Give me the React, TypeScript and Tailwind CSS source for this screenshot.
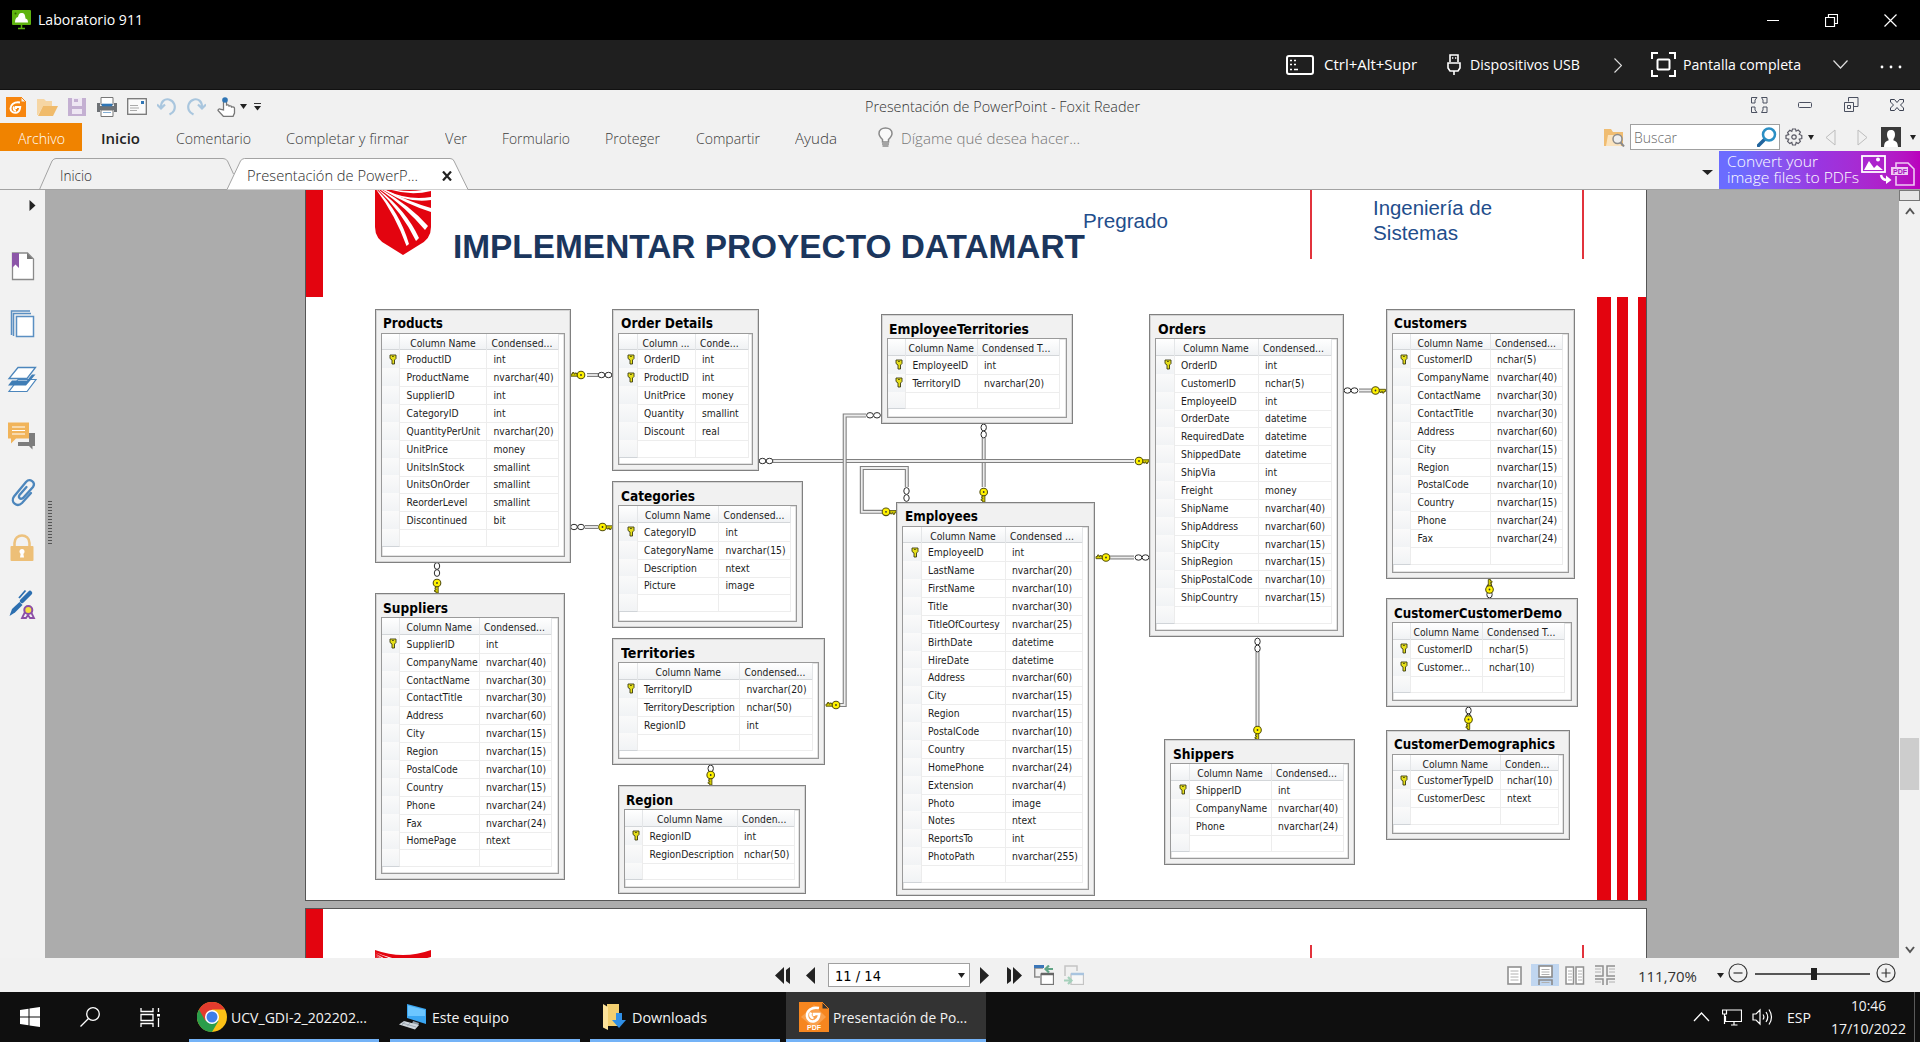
import { useLayoutEffect, useRef } from "react";
import type { ReactNode } from "react";

/* Text stretched horizontally to fill the width of its box. */
function Fit({ className, children }: { className: string; children: ReactNode }) {
  const outer = useRef<HTMLSpanElement>(null);
  const inner = useRef<HTMLSpanElement>(null);
  useLayoutEffect(() => {
    const o = outer.current;
    const i = inner.current;
    if (o && i && i.offsetWidth) {
      const w = i.getBoundingClientRect().width;
      i.style.transform = `scaleX(${o.clientWidth / w})`;
    }
  }, []);
  return (
    <span ref={outer} className={"block shrink-0 whitespace-nowrap " + className}>
      <span ref={inner} className="inline-block origin-left">
        {children}
      </span>
    </span>
  );
}

function Ico({ w, h, className = "", children }: { w: number; h: number; className?: string; children: ReactNode }) {
  return (
    <svg width={w} height={h} viewBox={`0 0 ${w} ${h}`} fill="none" className={"block shrink-0 " + className}>
      {children}
    </svg>
  );
}

function Caret({ className = "", w = 7 }: { className?: string; w?: number }) {
  return (
    <Ico w={w} h={5} className={className}>
      <path d={`M0 0H${w}L${w / 2} 5Z`} fill="#222" />
    </Ico>
  );
}

/* ---------- Remote desktop client ---------- */

function TitleBar() {
  return (
    <div className="flex h-10 items-center bg-black text-[14.5px] text-white">
      <Ico w={20} h={20} className="ml-3">
        <rect x="0" y="0" width="19" height="15" rx="1" fill="#5fb30f" />
        <path d="M3 12.5h13c0-3-1-3.500-2.500-4C13 4 12 3 9.500 3S6.500 5 6 7C4 7.500 3 9 3 12.500Z" fill="#fff" />
        <circle cx="3.500" cy="3.500" r="1" fill="#2c5c00" />
        <path d="M9.500 15v4M6 18.500h7" stroke="#5fb30f" strokeWidth="1.500" />
      </Ico>
      <Fit className="ml-1.5 w-[105px]">Laboratorio 911</Fit>
      <Ico w={12} h={12} className="ml-auto">
        <path d="M0 6.500H12" stroke="#fff" />
      </Ico>
      <Ico w={13} h={13} className="mt-px ml-[46px]">
        <path d="M.5 3.500h9v9h-9zM3.500 3.500v-3h9v9h-3" stroke="#fff" strokeWidth="1.200" />
      </Ico>
      <Ico w={13} h={13} className="mt-px mr-[23px] ml-[46px]">
        <path d="M.5.500l12 12M12.500.500l-12 12" stroke="#fff" strokeWidth="1.200" />
      </Ico>
    </div>
  );
}

function RemoteBar() {
  return (
    <div className="flex h-[50px] items-center border-b border-[#111] bg-[#1f1f1f] pl-[1286px] text-[14.5px] text-white">
      <Ico w={28} h={20}>
        <rect x="1" y="1" width="26" height="18" rx="2" stroke="#fff" strokeWidth="2" />
        <path d="M4 5.500h2m2 0h2M4 9.500h2m2 0h2M4 14.500h2m2 0h4" stroke="#fff" strokeWidth="1.600" />
      </Ico>
      <Fit className="ml-2.5 w-[93px]">Ctrl+Alt+Supr</Fit>
      <Ico w={14} h={21} className="ml-[30px]">
        <path d="M3 8V1h8v7M1 9h12v5l-2 3H3l-2-3zM7 17v4" stroke="#fff" strokeWidth="1.600" />
        <path d="M5 4h1.300M8 4h1.300" stroke="#fff" strokeWidth="1.500" />
      </Ico>
      <Fit className="ml-[9px] w-[110px]">Dispositivos USB</Fit>
      <Ico w={8} h={15} className="mt-px ml-[34px]">
        <path d="M.5.500l7 7-7 7" stroke="#ddd" strokeWidth="1.200" />
      </Ico>
      <Ico w={25} h={25} className="ml-[29px]">
        <path d="M1 7V1h6M18 1h6v6M24 18v6h-6M7 24H1v-6" stroke="#fff" strokeWidth="2" />
        <rect x="6.500" y="7.500" width="12" height="10" rx="1" stroke="#fff" strokeWidth="2" />
      </Ico>
      <Fit className="ml-[7px] w-[118px]">Pantalla completa</Fit>
      <Ico w={15} h={9} className="ml-[32px]">
        <path d="M.5.500l7 7.500 7-7.500" stroke="#ddd" strokeWidth="1.200" />
      </Ico>
      <Ico w={22} h={4} className="mt-1 ml-8">
        <circle cx="2" cy="2" r="1.400" fill="#fff" />
        <circle cx="11" cy="2" r="1.400" fill="#fff" />
        <circle cx="20" cy="2" r="1.400" fill="#fff" />
      </Ico>
    </div>
  );
}

/* ---------- Foxit Reader ribbon ---------- */

function QuickAccess() {
  return (
    <div className="flex h-[33px] items-center text-[14px] text-[#333]">
      <Ico w={20} h={20} className="ml-1.5">
        <path d="M0 0h15l5 5v15H0z" fill="#f7860f" />
        <path d="M15 0v5h5z" fill="#f1f1f1" stroke="#f7860f" />
        <path d="M14 5.500C8 4.500 4.500 8 4.500 11.500S8 16.500 11 15.500c2.500-.9 3-3 3.200-5.500H10v2M8 9.500c-1 2.500.2 4 2 4" stroke="#fff" strokeWidth="2" />
      </Ico>
      <Ico w={21} h={18} className="ml-[11px]">
        <path d="M0 1h7l2 2h6v5H6L1 17H0z" fill="#f6d6a4" />
        <path d="M6 8h15l-5 10H1z" fill="#f0bb6b" />
      </Ico>
      <Ico w={18} h={18} className="ml-2.5">
        <path d="M0 0h18v18H0z" fill="#c4b0d2" />
        <path d="M4 0h10v8H4zM4 11h10v5H4z" fill="#eee7f3" />
        <path d="M6 1h4v3H6z" fill="#c4b0d2" />
      </Ico>
      <Ico w={20} h={20} className="ml-[11px]">
        <path d="M4 .500h12v7H4zM4 13h12v6.500H4z" fill="#fff" stroke="#777" />
        <path d="M0 6h3v3h14V6h3v9h-3v-2H3v2H0z" fill="#6e7276" />
        <path d="M5 7h10v2H5zM6 15.500h8" fill="#2f75b5" stroke="#2f75b5" strokeWidth=".6" />
      </Ico>
      <Ico w={20} h={17} className="ml-2.5">
        <rect x=".7" y=".7" width="18.600" height="15.600" fill="#fafafa" stroke="#777" strokeWidth="1.300" />
        <path d="M3 7.500h8M3 10h9M3 12.500h7" stroke="#aaa" />
        <path d="M14 3h3v3h-3z" fill="#2f75b5" />
      </Ico>
      <Ico w={20} h={19} className="ml-[10px]">
        <path d="M4 10C4 4 8 1.500 12 2.500c5 1.500 7 6.500 5 11-1 2-2.500 3-4.500 4M0 7.500l4 4 4-4" stroke="#a9c6de" strokeWidth="2.200" />
      </Ico>
      <Ico w={20} h={19} className="ml-[9px]">
        <path d="M16 10C16 4 12 1.500 8 2.500 3 4 1 9 3 13.500c1 2 2.500 3 4.500 4M20 7.500l-4 4-4-4" stroke="#a9c6de" strokeWidth="2.200" />
      </Ico>
      <Ico w={19} h={20} className="ml-[11px]">
        <path d="M6.500 13V3.500c0-2 3-2 3 0V8c2-.5 2.500.3 2.500 1 2-.5 2.500.3 2.500 1 2-.4 3 .2 3 1.500V16l-1.500 3.500H6.500L1 13.500c0-1.500 1.500-2 3-1z" fill="#fff" stroke="#777" strokeWidth="1.300" />
        <circle cx="8" cy="3" r="2.800" fill="#2f75b5" />
      </Ico>
      <Caret className="ml-1" w={7} />
      <Ico w={7} h={8} className="ml-[7px]">
        <path d="M0 .500h7" stroke="#333" />
        <path d="M0 3h7L3.500 7.500z" fill="#222" />
      </Ico>
      <Fit className="ml-[604px] w-[275px]">Presentación de PowerPoint - Foxit Reader</Fit>
      <div className="ml-auto flex items-center pr-4 pb-1">
        <Ico w={17} h={16}>
          <path d="M.5 6V.500H6L4 3v3zM16 6V.500h-5.500L12 3v3zM.5 10v5.500H6L4 13v-3zM16 10v5.500h-5.500L12 13v-3z" stroke="#4b5060" />
        </Ico>
        <Ico w={14} h={6} className="ml-[30px]">
          <rect x=".5" y=".5" width="13" height="5" rx="1" stroke="#4b5060" />
        </Ico>
        <Ico w={15} h={15} className="ml-8">
          <path d="M4.500 4.500V.500h9.500v9h-4M.5 5.500h9v9h-9zM3.500 8.500h3v3h-3z" stroke="#4b5060" />
        </Ico>
        <Ico w={14} h={12} className="ml-[31px]">
          <path d="M.5.500h4L7 3.500 9.500.500h4v2.500l-3 3 3 3v2.500h-4L7 8.500l-2.500 3h-4V9l3-3-3-3z" stroke="#3b4050" />
        </Ico>
      </div>
    </div>
  );
}

function RibbonTabs() {
  return (
    <div className="flex h-7 items-center text-[14px] text-[#3c3c3c]">
      <div className="flex h-7 w-[82px] items-center justify-center bg-[#f08300] pt-0.5 text-white">
        <Fit className="w-[47px]">Archivo</Fit>
      </div>
      <Fit className="mt-0.5 ml-[19px] w-[39px] text-[15px] font-semibold text-[#222]">Inicio</Fit>
      <div className="flex items-center pt-0.5">
        <Fit className="ml-[36px] w-[75px]">Comentario</Fit>
        <Fit className="ml-[35px] w-[123px]">Completar y firmar</Fit>
        <Fit className="ml-[36px] w-[22px]">Ver</Fit>
        <Fit className="ml-[35px] w-[68px]">Formulario</Fit>
        <Fit className="ml-[35px] w-[55px]">Proteger</Fit>
        <Fit className="ml-[36px] w-[64px]">Compartir</Fit>
        <Fit className="ml-[35px] w-[42px]">Ayuda</Fit>
      </div>
      <Ico w={15} h={20} className="ml-[41px]">
        <path d="M4.500 15v-2.500C2 10 1 8.500 1 6.500 1 3 4 1 7.500 1S14 3 14 6.500c0 2-1 3.500-3.500 6V15z" fill="#fafafa" stroke="#8a8a8a" strokeWidth="1.500" />
        <path d="M4 17h7M4.500 19h6" stroke="#8a8a8a" strokeWidth="1.300" />
      </Ico>
      <Fit className="mt-0.5 ml-[8px] w-[179px] text-[#767676]">Dígame qué desea hacer...</Fit>
      <div className="ml-auto flex items-center pr-1">
        <Ico w={21} h={20}>
          <path d="M0 2h7l2 3h10v14H0z" fill="#f0bd72" />
          <path d="M4 8h13v11H2z" fill="#fbe3bd" />
          <circle cx="13.500" cy="12" r="4.500" fill="#eee" stroke="#8b8b8b" strokeWidth="1.500" />
          <path d="M16.500 15.500l3.500 4" stroke="#8b8b8b" strokeWidth="2" />
        </Ico>
        <div className="ml-[5px] flex h-[26px] w-[150px] items-center border border-[#a0a0a0] bg-white pr-0.5 pl-[3px] text-[#6a6a6a]">
          <Fit className="w-[43px]">Buscar</Fit>
          <Ico w={20} h={20} className="ml-auto">
            <path d="M8 12L1.500 18.500" stroke="#21659e" strokeWidth="3.500" strokeLinecap="round" />
            <circle cx="12" cy="7.500" r="6" fill="#fff" stroke="#2b8fc4" strokeWidth="2.500" />
          </Ico>
        </div>
        <Ico w={18} h={18} className="ml-[5px]">
          <path d="M7.500 1h3l.6 2.200L13.200 2l2.200 2.200-1.200 2L16.800 7.500v3l-2.600.7 1.200 2.200-2.200 2.200-2-1.200-.7 2.600h-3l-.7-2.600-2 1.200-2.200-2.200 1.200-2.200L1 10.500v-3l2.800-.8-1.200-2.200L4.800 2.300l2 1z" stroke="#5b5b66" strokeWidth="1.200" />
          <circle cx="9" cy="9" r="2.200" stroke="#5b5b66" strokeWidth="1.200" />
        </Ico>
        <Caret className="ml-[5px]" w={6} />
        <Ico w={11} h={17} className="ml-[11px]">
          <path d="M10 1v15L1 8.500z" stroke="#bdbdbd" />
        </Ico>
        <Ico w={11} h={17} className="ml-[21px]">
          <path d="M1 1v15l9-7.500z" stroke="#bdbdbd" />
        </Ico>
        <Ico w={20} h={20} className="ml-[13px]">
          <path d="M0 0h20v20H0z" fill="#3a3a3a" />
          <path d="M10 3c3 0 4 2 4 4.500 0 2-.8 3.500-1.500 4.500v1.500c3 1 4 1.500 4.500 6.500H3c.5-5 1.500-5.500 4.500-6.500V12C6.800 11 6 9.500 6 7.500 6 5 7 3 10 3z" fill="#fff" />
        </Ico>
        <Caret className="ml-[9px]" w={6} />
      </div>
    </div>
  );
}

function DocTabs() {
  return (
    <div className="flex h-[38px] items-stretch">
      <div className="relative h-[39px] w-[470px]">
        <svg width="470" height="39" className="absolute inset-0" fill="none">
          <path d="M39.500 38.500L52 10q1.500-2.500 4-2.500H223q3 0 4.500 2.500l6 13" stroke="#a3a3a3" />
          <path d="M227 38.500L240.500 10q1.500-2.500 4-2.500H450q3 0 4 2.500l14 28.500" fill="#fff" stroke="#a3a3a3" />
        </svg>
        <div className="relative flex h-full items-center pt-[9px] pl-[60px] text-[14px] text-[#2c2c2c]">
          <Fit className="w-[32px]">Inicio</Fit>
          <Fit className="ml-[155px] w-[171px]">Presentación de PowerP...</Fit>
          <Ico w={10} h={10} className="mt-0.5 ml-[24px]">
            <path d="M1 .5l8 9M9 .5l-8 9" stroke="#222" strokeWidth="2.200" />
          </Ico>
        </div>
      </div>
      <Caret className="mt-[19px] mr-1.5 ml-auto" w={11} />
      <div className="flex w-[201px] bg-linear-to-r from-[#6b6cff] from-10% via-[#9a35e0] to-[#ba00bd] pl-2 text-[14.5px] leading-4 text-white">
        <div className="pt-[3px]">
          <Fit className="w-[91px]">Convert your</Fit>
          <Fit className="w-[132px]">image files to PDFs</Fit>
        </div>
        <Ico w={58} h={38} className="ml-0.5">
          <rect x="1" y="5" width="23" height="16" stroke="#fff" strokeWidth="1.800" />
          <path d="M3 19l5-9 5 7 3-3 6 5z" fill="#fff" />
          <circle cx="17" cy="8.500" r="2" fill="#fff" />
          <path d="M20 24q1 5 6 5" stroke="#fff" strokeWidth="2.500" />
          <path d="M25 24.500l5.500 4.500-5.500 4z" fill="#fff" />
          <path d="M35 17v-5h12l6 6v16H35v-9" stroke="#f0c8f4" strokeWidth="1.600" />
          <rect x="30" y="16" width="17" height="8" fill="#f0c8f4" />
          <text x="32" y="22.600" fontSize="7" fontWeight="700" fill="#a510bd" fontFamily="Liberation Sans">PDF</text>
        </Ico>
      </div>
    </div>
  );
}

/* ---------- Side panel ---------- */

function SideBar() {
  return (
    <div className="flex w-[45px] shrink-0 flex-col bg-[#f2f2f2]">
      <Ico w={45} h={440}>
        <path d="M29.500 10v11l6-5.500z" fill="#222" />
        {/* bookmarks */}
        <path d="M12.500 63h15l6 6v20.500h-21z" fill="#fff" stroke="#8a8a8a" strokeWidth="1.300" />
        <path d="M27 63v6h6z" fill="#777" />
        <path d="M12 63h7v15l-3.500-3.500L12 78z" fill="#8c56a8" />
        {/* pages */}
        <path d="M11.500 145v-24H30M13.500 146v-22.500H31" stroke="#5a8fc2" strokeWidth="1.500" />
        <rect x="16.500" y="126.500" width="17" height="20" fill="#fff" stroke="#5a8fc2" strokeWidth="1.500" />
        {/* layers */}
        <path d="M9 201.500h18l9-12H18z" fill="#fff" stroke="#4c86bc" strokeWidth="1.200" />
        <path d="M8 195.500h18l9.500-11H32l-5 6H12z" fill="#3f7db5" />
        <path d="M9 188.500h18l8.500-11H18z" fill="#fff" stroke="#4c86bc" strokeWidth="1.300" />
        {/* comments */}
        <path d="M29 243h6v13h-2.500v3.500L29 256H18v-4h11z" fill="#7d7d7d" />
        <path d="M8 232.500h21v16H16l-5 5v-5H8z" fill="#f1b45a" />
        <path d="M12 237h13M12 240.500h13M12 244h13" stroke="#fff" strokeWidth="1.200" />
        {/* attachments */}
        <path d="M31 303l-9 10c-5 5-12-1-8-6.500L26 292c4-4.500 10 .5 7 5l-10 11c-3 2-5-.5-3.500-3l7-8" stroke="#4c86bc" strokeWidth="2.300" strokeLinecap="round" />
        {/* security */}
        <path d="M14.500 357v-4c0-10 15-10 15 0v4" stroke="#edc27e" strokeWidth="2.600" />
        <rect x="10.500" y="356" width="23" height="15" rx="1" fill="#edbf77" />
        <circle cx="22" cy="361.500" r="2.500" fill="#fff" />
        <path d="M21 362h2l1 5.500h-4z" fill="#fff" />
        {/* signatures */}
        <path d="M9.500 426l2.500-7 7.500-7 3 3-7.500 7.500z" fill="#2c6fb0" />
        <path d="M22 411l8-8" stroke="#2c6fb0" strokeWidth="4.500" strokeLinecap="round" />
        <path d="M19 408l6.500-7.500" stroke="#2c6fb0" strokeWidth="1.800" />
        <path d="M25 422l-3 6h4l2-3 2 3h4l-3-6" stroke="#8c4fa5" strokeWidth="1.800" />
        <circle cx="28.300" cy="420" r="4" fill="#f6e043" stroke="#8c4fa5" strokeWidth="2" />
      </Ico>
    </div>
  );
}

/* ---------- Database diagram ---------- */

type Tbl = {
  name: string;
  box: [number, number, number, number];
  div: number;
  right: number;
  tw: number;
  head: [string, string];
  keys: number;
  rows: string;
};

const C3 = "Condensed...";
const TABLES: Tbl[] = [
  { name: "Products", box: [374.5, 308.5, 570.5, 562.5], div: 487, right: 559, tw: 60, head: ["Column Name", C3], keys: 1,
    rows: "ProductID int|ProductName nvarchar(40)|SupplierID int|CategoryID int|QuantityPerUnit nvarchar(20)|UnitPrice money|UnitsInStock smallint|UnitsOnOrder smallint|ReorderLevel smallint|Discontinued bit" },
  { name: "Order Details", box: [612, 308.5, 759, 471], div: 695.5, right: 748.5, tw: 92, head: ["Column ...", "Conde..."], keys: 2,
    rows: "OrderID int|ProductID int|UnitPrice money|Quantity smallint|Discount real" },
  { name: "Categories", box: [612, 481, 802.5, 628], div: 719, right: 791, tw: 74, head: ["Column Name", C3], keys: 1,
    rows: "CategoryID int|CategoryName nvarchar(15)|Description ntext|Picture image" },
  { name: "Suppliers", box: [374.5, 593, 565, 880], div: 479.5, right: 552, tw: 65, head: ["Column Name", C3], keys: 1,
    rows: "SupplierID int|CompanyName nvarchar(40)|ContactName nvarchar(30)|ContactTitle nvarchar(30)|Address nvarchar(60)|City nvarchar(15)|Region nvarchar(15)|PostalCode nvarchar(10)|Country nvarchar(15)|Phone nvarchar(24)|Fax nvarchar(24)|HomePage ntext" },
  { name: "Territories", box: [612, 638, 825, 765], div: 740, right: 813, tw: 74, head: ["Column Name", C3], keys: 1,
    rows: "TerritoryID nvarchar(20)|TerritoryDescription nchar(50)|RegionID int" },
  { name: "Region", box: [617.5, 785, 806, 894], div: 737.5, right: 794.5, tw: 47, head: ["Column Name", "Conden..."], keys: 1,
    rows: "RegionID int|RegionDescription nchar(50)" },
  { name: "EmployeeTerritories", box: [880.5, 314, 1072.5, 424], div: 977.5, right: 1059.5, tw: 140, head: ["Column Name", "Condensed T..."], keys: 2,
    rows: "EmployeeID int|TerritoryID nvarchar(20)" },
  { name: "Employees", box: [896, 501.5, 1095, 896], div: 1005.5, right: 1083, tw: 73, head: ["Column Name", "Condensed ..."], keys: 1,
    rows: "EmployeeID int|LastName nvarchar(20)|FirstName nvarchar(10)|Title nvarchar(30)|TitleOfCourtesy nvarchar(25)|BirthDate datetime|HireDate datetime|Address nvarchar(60)|City nvarchar(15)|Region nvarchar(15)|PostalCode nvarchar(10)|Country nvarchar(15)|HomePhone nvarchar(24)|Extension nvarchar(4)|Photo image|Notes ntext|ReportsTo int|PhotoPath nvarchar(255)" },
  { name: "Orders", box: [1149, 314, 1344, 637], div: 1258.5, right: 1332, tw: 48, head: ["Column Name", C3], keys: 1,
    rows: "OrderID int|CustomerID nchar(5)|EmployeeID int|OrderDate datetime|RequiredDate datetime|ShippedDate datetime|ShipVia int|Freight money|ShipName nvarchar(40)|ShipAddress nvarchar(60)|ShipCity nvarchar(15)|ShipRegion nvarchar(15)|ShipPostalCode nvarchar(10)|ShipCountry nvarchar(15)" },
  { name: "Customers", box: [1385.5, 308.5, 1575, 579], div: 1490.5, right: 1562.5, tw: 73, head: ["Column Name", C3], keys: 1,
    rows: "CustomerID nchar(5)|CompanyName nvarchar(40)|ContactName nvarchar(30)|ContactTitle nvarchar(30)|Address nvarchar(60)|City nvarchar(15)|Region nvarchar(15)|PostalCode nvarchar(10)|Country nvarchar(15)|Phone nvarchar(24)|Fax nvarchar(24)" },
  { name: "CustomerCustomerDemo", box: [1385.5, 598, 1577.5, 707], div: 1482.5, right: 1564.5, tw: 168, head: ["Column Name", "Condensed T..."], keys: 2,
    rows: "CustomerID nchar(5)|Customer... nchar(10)" },
  { name: "CustomerDemographics", box: [1385.5, 729.5, 1570, 840], div: 1500.5, right: 1559, tw: 161, head: ["Column Name", "Conden..."], keys: 1,
    rows: "CustomerTypeID nchar(10)|CustomerDesc ntext" },
  { name: "Shippers", box: [1164, 739, 1355, 865], div: 1271.5, right: 1343.5, tw: 61, head: ["Column Name", C3], keys: 1,
    rows: "ShipperID int|CompanyName nvarchar(40)|Phone nvarchar(24)" },
];

/* Top-left corner of the slide, used to place diagram nodes. */
const OX = 306;
const OY = 190;

function RowKey() {
  return (
    <Ico w={8} h={11} className="mr-[2px]">
      <path d="M1 1h6v3.500L5.500 6v4H3V6L1 4.500z" fill="#e6df1a" stroke="#3a3a10" strokeWidth=".9" />
      <path d="M3.200 2.500h1.500" stroke="#3a3a10" />
    </Ico>
  );
}

function DbTable({ t }: { t: Tbl }) {
  const [x1, y1, x2, y2] = t.box;
  const cols = `18.500px ${t.div - x1 - 25.5}px ${t.right - t.div}px`;
  const rows = [...t.rows.split("|").map((r) => r.split(" ")), ["", ""]];
  return (
    <div
      className="absolute flex flex-col border border-[#808080] bg-[#f1f1f1] px-[5px] pb-[5px] shadow-[inset_0_0_0_1px_#d4d4d4]"
      style={{ left: x1 - OX, top: y1 - OY, width: x2 - x1, height: y2 - y1 }}
    >
      <div className="h-[23.300px] pt-[5.500px] pl-[2.500px] text-[13.800px] leading-[17px] font-bold text-black">
        <span className="block" style={{ width: t.tw }}>
          <Fit className="w-full">{t.name}</Fit>
        </span>
      </div>
      <div className="grow border border-[#9a9a9a] bg-white text-[10.250px] text-[#1c1c1c] shadow-[inset_0_0_0_0.500px_#c8c8c8]">
        <div className="grid h-[16.500px] border-b border-[#d3d6d9] bg-linear-to-b from-white to-[#f0f2f4]" style={{ gridTemplateColumns: cols, width: t.right - x1 - 7 }}>
          <span className="border-r border-[#e4e6e8]" />
          <span className="overflow-hidden border-r border-[#e4e6e8] text-center leading-[18px] whitespace-nowrap">{t.head[0]}</span>
          <span className="border-r border-[#e4e6e8] pl-[4.500px] leading-[18px] tracking-[0.050px] whitespace-nowrap">{t.head[1]}</span>
        </div>
        {rows.map(([a, b], i) => (
          <div key={i} className="grid h-[17.880px]" style={{ gridTemplateColumns: cols }}>
            <span className="flex items-center justify-end border-r border-b border-r-[#ececec] border-b-[#d0d4d8] bg-linear-to-b from-[#fafafa] to-[#f1f3f5]">{i < t.keys && <RowKey />}</span>
            <span className="border-r border-b border-[#ededed] pl-[6.500px] leading-[18px] tracking-[0.020px] whitespace-nowrap">{a}</span>
            <span className="border-r border-b border-[#ededed] pl-[6.500px] leading-[18px] tracking-[0.020px] whitespace-nowrap">{b}</span>
          </div>
        ))}
      </div>
    </div>
  );
}

/* Key marker; the teeth point right before rotation. */
function Key({ x, y, r }: { x: number; y: number; r: number }) {
  return (
    <g transform={`translate(${x} ${y}) rotate(${r})`}>
      <path d="M3 -1.200H10V1H8.500V2.500H7V1H6V2H4.500V1H3Z" fill="#d8d000" stroke="#55500c" strokeWidth=".9" />
      <circle r="3.800" fill="#fff200" stroke="#55500c" strokeWidth="1.100" />
      <circle r=".9" fill="#333" />
    </g>
  );
}

function Inf({ x, y, v = false }: { x: number; y: number; v?: boolean }) {
  return (
    <g transform={`translate(${x} ${y}) rotate(${v ? 90 : 0})`} fill="#fff" stroke="#2b2b2b">
      <ellipse cx="-3.500" rx="3.400" ry="2.700" />
      <ellipse cx="3.500" rx="3.400" ry="2.700" />
    </g>
  );
}

const LINKS = [
  "M587 375H598",
  "M983.700 438V487",
  "M773 461H1134",
  "M585 527H598",
  "M866 415.500H844.700V705H840",
  "M906.800 487V468H861.800V511.800H882",
  "M1109 557.500H1134",
  "M1359 390.500H1372",
  "M1257.500 652V726",
];

function Connectors() {
  return (
    <svg width="1341" height="711" viewBox={`${OX} ${OY} 1341 711`} fill="none" className="absolute inset-0">
      {LINKS.map((d) => (
        <g key={d}>
          <path d={d} stroke="#808080" strokeWidth="4" />
          <path d={d} stroke="#ececec" strokeWidth="1.800" />
        </g>
      ))}
      <Key x={581} y={375} r={180} />
      <Inf x={605} y={375} />
      <Inf x={766} y={461} />
      <Key x={1139} y={461} r={0} />
      <Inf x={577.500} y={527} />
      <Key x={602.500} y={527} r={0} />
      <Inf x={437} y={569.500} v />
      <Key x={437} y={583} r={90} />
      <Inf x={873.500} y={415.300} />
      <Key x={836} y={705} r={180} />
      <Inf x={983.700} y={431} v />
      <Key x={983.700} y={492} r={90} />
      <Inf x={906.500} y={494.500} v />
      <Key x={886} y={511.800} r={0} />
      <Key x={1106} y={557.500} r={180} />
      <Inf x={1142} y={557.500} />
      <Inf x={1351} y={390.500} />
      <Key x={1375.500} y={390.500} r={0} />
      <Inf x={1257.500} y={645} v />
      <Key x={1257.500} y={730} r={90} />
      <Inf x={1489.500} y={591} v />
      <Key x={1489.500} y={589.500} r={-90} />
      <Inf x={1468.500} y={714} v />
      <Key x={1468.500} y={719.500} r={90} />
      <Inf x={710.700} y={772} v />
      <Key x={710.700} y={775} r={90} />
    </svg>
  );
}

/* Crest: a red shield with white rays fanning out of its top-left corner. */
function Shield({ className, dy }: { className: string; dy: number }) {
  return (
    <svg width="56" height="66" viewBox={`0 ${dy} 56 66`} fill="none" className={"absolute " + className}>
      <path d="M0 -9q28 10 56 0v46q0 12-12 18l-16 10-16-10Q0 49 0 37z" fill="#e3040f" />
      <g fill="#fff">
        <path d="M0 -7Q28 6 56 -2V1Q28 8 0 -7z" />
        <path d="M0 -6Q28 12 56 7V10Q28 14 0 -6z" />
        <path d="M0 -5Q34 12 56 18V22Q30 14 0 -5z" />
        <path d="M0 -4Q34 14 53 36L50 40Q30 16 0 -4z" />
        <path d="M0 -3Q30 18 44 48L41 51Q26 20 0 -3z" />
        <path d="M0 -2Q24 20 34 54L31.500 56Q20 24 0 -2z" />
      </g>
    </svg>
  );
}

function Slide() {
  return (
    <div className="relative h-[711px] w-[1342px] shrink-0 border-x border-b border-[#555] bg-white font-['DejaVu_Sans_Condensed','DejaVu_Sans',sans-serif]">
      <div className="absolute top-0 left-0 h-[107px] w-[17px] bg-[#e3040f]" />
      <Shield className="top-0 left-[69px]" dy={0} />
      <div className="absolute top-[37px] left-[147px] font-['Liberation_Sans',sans-serif] text-[32.500px] leading-10 font-bold text-[#1b365d]">
        <Fit className="w-[632px]">IMPLEMENTAR PROYECTO DATAMART</Fit>
      </div>
      <div className="absolute top-[19px] left-[777px] font-['Liberation_Sans',sans-serif] text-[20px] leading-6 text-[#1f4e8c]">
        <Fit className="w-[85px]">Pregrado</Fit>
      </div>
      <div className="absolute top-0 left-[1004px] h-[69px] w-[2px] bg-[#e2333c]" />
      <div className="absolute top-0 left-[1276px] h-[69px] w-[2px] bg-[#e2333c]" />
      <div className="absolute top-[6px] left-[1067px] font-['Liberation_Sans',sans-serif] text-[20px] leading-[24.500px] text-[#1f4e8c]">
        <Fit className="w-[119px]">Ingeniería de</Fit>
        <Fit className="w-[85px]">Sistemas</Fit>
      </div>
      <div className="absolute top-[107px] right-0 bottom-0 flex w-[49px]">
        <div className="w-[14px] bg-[#e3040f]" />
        <div className="ml-[6px] w-[11px] bg-[#e3040f]" />
        <div className="ml-auto w-[8px] bg-[#e3040f]" />
      </div>
      <Connectors />
      {TABLES.map((t) => (
        <DbTable key={t.name} t={t} />
      ))}
    </div>
  );
}

function NextSlide() {
  return (
    <div className="relative h-[50px] w-[1342px] shrink-0 overflow-hidden border-x border-t border-[#555] bg-white">
      <div className="absolute top-0 left-0 h-full w-[17px] bg-[#e3040f]" />
      <Shield className="top-[41px] left-[69px]" dy={-9} />
      <div className="absolute top-[36px] left-[1004px] h-4 w-[2px] bg-[#e2333c]" />
      <div className="absolute top-[36px] left-[1276px] h-4 w-[2px] bg-[#e2333c]" />
    </div>
  );
}

function Viewer() {
  return (
    <div className="flex h-[768px] overflow-hidden">
      <SideBar />
      <div className="flex grow bg-[#acacac]">
        <div className="mt-[310px] ml-[3px] h-[44px] w-[4px] shrink-0 bg-[radial-gradient(circle,#555_0.700px,transparent_0.900px)] bg-size-[2px_3px]" />
        <div className="ml-[253px] flex flex-col gap-[7px]">
          <Slide />
          <NextSlide />
        </div>
      </div>
      <div className="flex w-[21px] shrink-0 flex-col items-center bg-[#f1f1f1]">
        <div className="h-[11px] w-full border border-[#777] bg-[#e6e6e6]" />
        <Ico w={10} h={8} className="mt-[6px]">
          <path d="M1 7l4-5 4 5" stroke="#555" strokeWidth="2" />
        </Ico>
        <div className="mt-[523px] h-[52px] w-[19px] bg-[#cdcdcd]" />
        <Ico w={10} h={8} className="mt-auto mb-1">
          <path d="M1 1l4 5 4-5" stroke="#555" strokeWidth="2" />
        </Ico>
      </div>
    </div>
  );
}

/* ---------- Status bar ---------- */

function StatusBar() {
  return (
    <div className="flex h-[34px] items-center bg-[#f1f1f1] pl-[775px] text-[14px] text-black">
      <Ico w={15} h={17}>
        <path d="M9 0v17L0 8.500zM15 0v17l-4-3V3z" fill="#222" />
      </Ico>
      <Ico w={9} h={17} className="ml-4">
        <path d="M9 0v17L0 8.500z" fill="#222" />
      </Ico>
      <div className="ml-[13px] flex h-6 w-[142px] items-center border border-[#a0a0a0] bg-white pr-1 pl-1.5 font-['DejaVu_Sans_Condensed',sans-serif]">
        <Fit className="mt-0.5 w-[46px]">11 / 14</Fit>
        <Caret className="ml-auto" w={7} />
      </div>
      <Ico w={9} h={17} className="ml-2.5">
        <path d="M0 0v17l9-8.500z" fill="#222" />
      </Ico>
      <Ico w={15} h={17} className="ml-[18px]">
        <path d="M6 0v17l9-8.500zM0 0v17l4-3V3z" fill="#222" />
      </Ico>
      <Ico w={20} h={20} className="ml-3">
        <path d="M.7 1v11H6M.7 3H9" stroke="#8a8a8a" strokeWidth="1.500" />
        <path d="M0 0h10v3H0z" fill="#3b76b8" />
        <rect x="7" y="9" width="12.500" height="10.500" fill="#fff" stroke="#777" strokeWidth="1.300" />
        <path d="M7 9h13" stroke="#666" strokeWidth="2.500" />
        <path d="M19 4h-7M15 .5L11.500 4 15 7.500" stroke="#62a586" strokeWidth="2.200" />
      </Ico>
      <Ico w={20} h={20} className="ml-2.5">
        <path d="M1 8V1h12v5M1 11V8" stroke="#c4c4c4" strokeWidth="1.500" />
        <rect x="7" y="9" width="12.500" height="10.500" fill="#f7f7f7" stroke="#c4c4c4" strokeWidth="1.300" />
        <path d="M7 9h13" stroke="#a9c4df" strokeWidth="2.500" />
        <path d="M0 15.500h7M4 12l3.500 3.500L4 19" stroke="#a5d0bb" strokeWidth="2.200" />
      </Ico>
      <Ico w={15} h={19} className="ml-[423px]">
        <rect x="1" y="1" width="13" height="17" fill="#fff" stroke="#909090" strokeWidth="1.600" />
        <path d="M3.500 5h8M3.500 8h8M3.500 11h8M3.500 14h8" stroke="#b0b0b0" />
      </Ico>
      <div className="ml-[9px] flex h-[22px] w-7 items-center justify-center bg-[#c0d6f0]">
        <Ico w={15} h={20}>
          <rect x="1" y="1" width="13" height="11" fill="#fff" stroke="#8a8a8a" strokeWidth="1.600" />
          <path d="M3.500 4.500h8M3.500 7h8M3.500 9.500h8M3.500 17.500h8" stroke="#b0b0b0" />
          <path d="M1 20v-5h13v5" stroke="#8a8a8a" strokeWidth="1.600" />
        </Ico>
      </div>
      <Ico w={20} h={19} className="ml-1.5">
        <path d="M1 1h7.500v17H1zM11 1h7.500v17H11z" fill="#fff" stroke="#909090" strokeWidth="1.500" />
        <path d="M3 5h4M3 8h4M3 11h4M3 14h4M13 5h4M13 8h4M13 11h4M13 14h4" stroke="#b0b0b0" />
      </Ico>
      <Ico w={20} h={20} className="ml-2.5">
        <path d="M0 1h8v10H0M20 1h-8v10h8M0 14h8v6M20 14h-8v6" stroke="#8f8f8f" strokeWidth="1.500" />
        <path d="M0 4h6M0 7h6M14 4h6M14 7h6M0 17h6M14 17h6" stroke="#b0b0b0" />
      </Ico>
      <Fit className="mt-0.5 ml-[23px] w-[59px] text-[#333]">111,70%</Fit>
      <Caret className="ml-5" w={7} />
      <Ico w={20} h={20} className="mb-1 ml-[4px]">
        <circle cx="10" cy="10" r="9" stroke="#333" strokeWidth="1.200" />
        <path d="M5.500 10h9" stroke="#333" strokeWidth="1.200" />
      </Ico>
      <Ico w={115} h={12} className="mb-0.5 ml-[7px]">
        <path d="M0 6h115" stroke="#222" strokeWidth="1.300" />
        <path d="M56 0h6v12h-6z" fill="#222" />
      </Ico>
      <Ico w={20} h={20} className="mb-1 ml-[6px]">
        <circle cx="10" cy="10" r="9" stroke="#333" strokeWidth="1.200" />
        <path d="M5.500 10h9M10 5.500v9" stroke="#333" strokeWidth="1.200" />
      </Ico>
    </div>
  );
}

/* ---------- Windows taskbar ---------- */

function TaskItem({ className, icon, children }: { className: string; icon: ReactNode; children: ReactNode }) {
  return (
    <div className={"flex h-[50px] shrink-0 items-center border-b-[3px] border-[#74b3f7] pt-[3px] " + className}>
      {icon}
      {children}
    </div>
  );
}

function TaskBar() {
  return (
    <div className="flex h-[50px] items-center bg-[#0f0f0f] text-[14.5px] text-[#f4f4f4]">
      <Ico w={20} h={20} className="ml-5">
        <path d="M0 3l8.500-1.200v7.700H0zM9.500 1.600L20 0v9.500H9.500zM0 10.500h8.500v7.700L0 17zM9.500 10.500H20V20L9.500 18.400z" fill="#fff" />
      </Ico>
      <Ico w={20} h={20} className="ml-10">
        <circle cx="13" cy="7" r="6.300" stroke="#fff" strokeWidth="1.300" />
        <path d="M8.500 11.500L.5 19.500" stroke="#fff" strokeWidth="1.300" />
      </Ico>
      <Ico w={20} h={19} className="ml-10">
        <path d="M1 0v3.500h12V0M1 19v-3.500h12V19M1 6.500h12v6H1zM18.500 0v4M18.500 10v9" stroke="#fff" strokeWidth="1.300" />
        <path d="M17 6h3v2.500h-3z" fill="#fff" />
      </Ico>
      <TaskItem
        className="ml-[29px] w-[190px] pl-2"
        icon={
          <Ico w={30} h={30}>
            <circle cx="15" cy="15" r="15" fill="#fbc116" />
            <path d="M15 15L2 7.500A15 15 0 0 0 15 30l6.500-11z" fill="#2a9d4a" />
            <path d="M2 7.500A15 15 0 0 1 28 7.500H15L8.500 19z" fill="#e33b2e" />
            <circle cx="15" cy="15" r="7" fill="#fff" />
            <circle cx="15" cy="15" r="5.500" fill="#3f7ee8" />
          </Ico>
        }
      >
        <Fit className="mt-0.5 ml-1 w-[136px]">UCV_GDI-2_202202...</Fit>
      </TaskItem>
      <TaskItem
        className="ml-[11px] w-[190px] pl-[9px]"
        icon={
          <Ico w={28} h={26}>
            <path d="M8 0l19 5v15L8 14z" fill="#3aa6f2" />
            <path d="M9 1.500l17 4.500v6L9 12z" fill="#6cc6ff" />
            <path d="M14 17l6 2-1 3-6-2z" fill="#8d9aa5" />
            <path d="M5 17l15 4-4 4.500L0 20.500z" fill="#cfd6dc" />
            <path d="M3 19l14 4M6 17.500l-3 3.500M11 19l-3 3.500" stroke="#8d9aa5" strokeWidth=".7" />
          </Ico>
        }
      >
        <Fit className="mt-0.5 ml-[5px] w-[77px]">Este equipo</Fit>
      </TaskItem>
      <TaskItem
        className="ml-[10px] w-[190px] pl-[13px]"
        icon={
          <Ico w={23} h={26}>
            <path d="M4 0h12v22H4z" fill="#f2cf70" />
            <path d="M0 0l5 3v23l-5-2.500z" fill="#fde39a" />
            <path d="M13 9h6v7h4l-7 8-7-8h4z" fill="#2f8fe6" />
          </Ico>
        }
      >
        <Fit className="mt-0.5 ml-[6px] w-[75px]">Downloads</Fit>
      </TaskItem>
      <TaskItem
        className="ml-[6px] w-[200px] bg-[#333333] pl-[13px]"
        icon={
          <Ico w={30} h={30}>
            <path d="M0 0h23l7 7v23H0z" fill="#f6861f" />
            <path d="M23 0v7h7z" fill="#333" stroke="#f6861f" />
            <path d="M2 15L15 3l12 12-12 11z" fill="#f9a04c" />
            <path d="M20 6C12 4.500 8 9 8 13.500s4 7 8 5.500c3-1.200 4-4 4.200-7H15v2M12 10.500c-1.500 3 0 5.500 2.500 5.500" stroke="#fff" strokeWidth="2.600" />
            <text x="8" y="28" fontSize="7" fontWeight="700" fill="#fff" fontFamily="Liberation Sans">PDF</text>
          </Ico>
        }
      >
        <Fit className="mt-0.5 ml-[4px] w-[134px]">Presentación de Po...</Fit>
      </TaskItem>
      <Ico w={17} h={10} className="ml-auto">
        <path d="M1 9l7.500-8L16 9" stroke="#fff" strokeWidth="1.300" />
      </Ico>
      <Ico w={20} h={17} className="ml-3">
        <path d="M5 1h14.500v11.500H3.500V7M9 16h6.500M12 12.500V16M.5 1h4v4h-4zM2.500 5v10" stroke="#fff" strokeWidth="1.200" />
      </Ico>
      <Ico w={21} h={18} className="ml-2.5">
        <path d="M1 6h3l4-4v14l-4-4H1z" stroke="#fff" strokeWidth="1.200" />
        <path d="M11 6.500q1.800 2.500 0 5M14 4q3.500 5 0 10M17 1.500q5 7.500 0 15" stroke="#fff" strokeWidth="1.200" />
      </Ico>
      <Fit className="mt-0.5 ml-[14px] w-[24px]">ESP</Fit>
      <div className="ml-5 flex w-[74px] flex-col items-center text-[14px] leading-[23px]">
        <Fit className="w-[35px]">10:46</Fit>
        <Fit className="w-[75px]">17/10/2022</Fit>
      </div>
      <div className="mr-[5px] ml-[9px] h-[50px] w-px bg-[#5a5a5a]" />
    </div>
  );
}

export default function App() {
  return (
    <div className="flex h-[1042px] w-[1920px] flex-col overflow-hidden bg-[#f1f1f1] font-['Open_Sans','Noto_Sans',sans-serif]">
      <TitleBar />
      <RemoteBar />
      <div className="h-[100px] border-b border-[#a3a3a3] bg-[#f1f1f1] font-light">
        <QuickAccess />
        <RibbonTabs />
        <DocTabs />
      </div>
      <Viewer />
      <StatusBar />
      <TaskBar />
    </div>
  );
}
